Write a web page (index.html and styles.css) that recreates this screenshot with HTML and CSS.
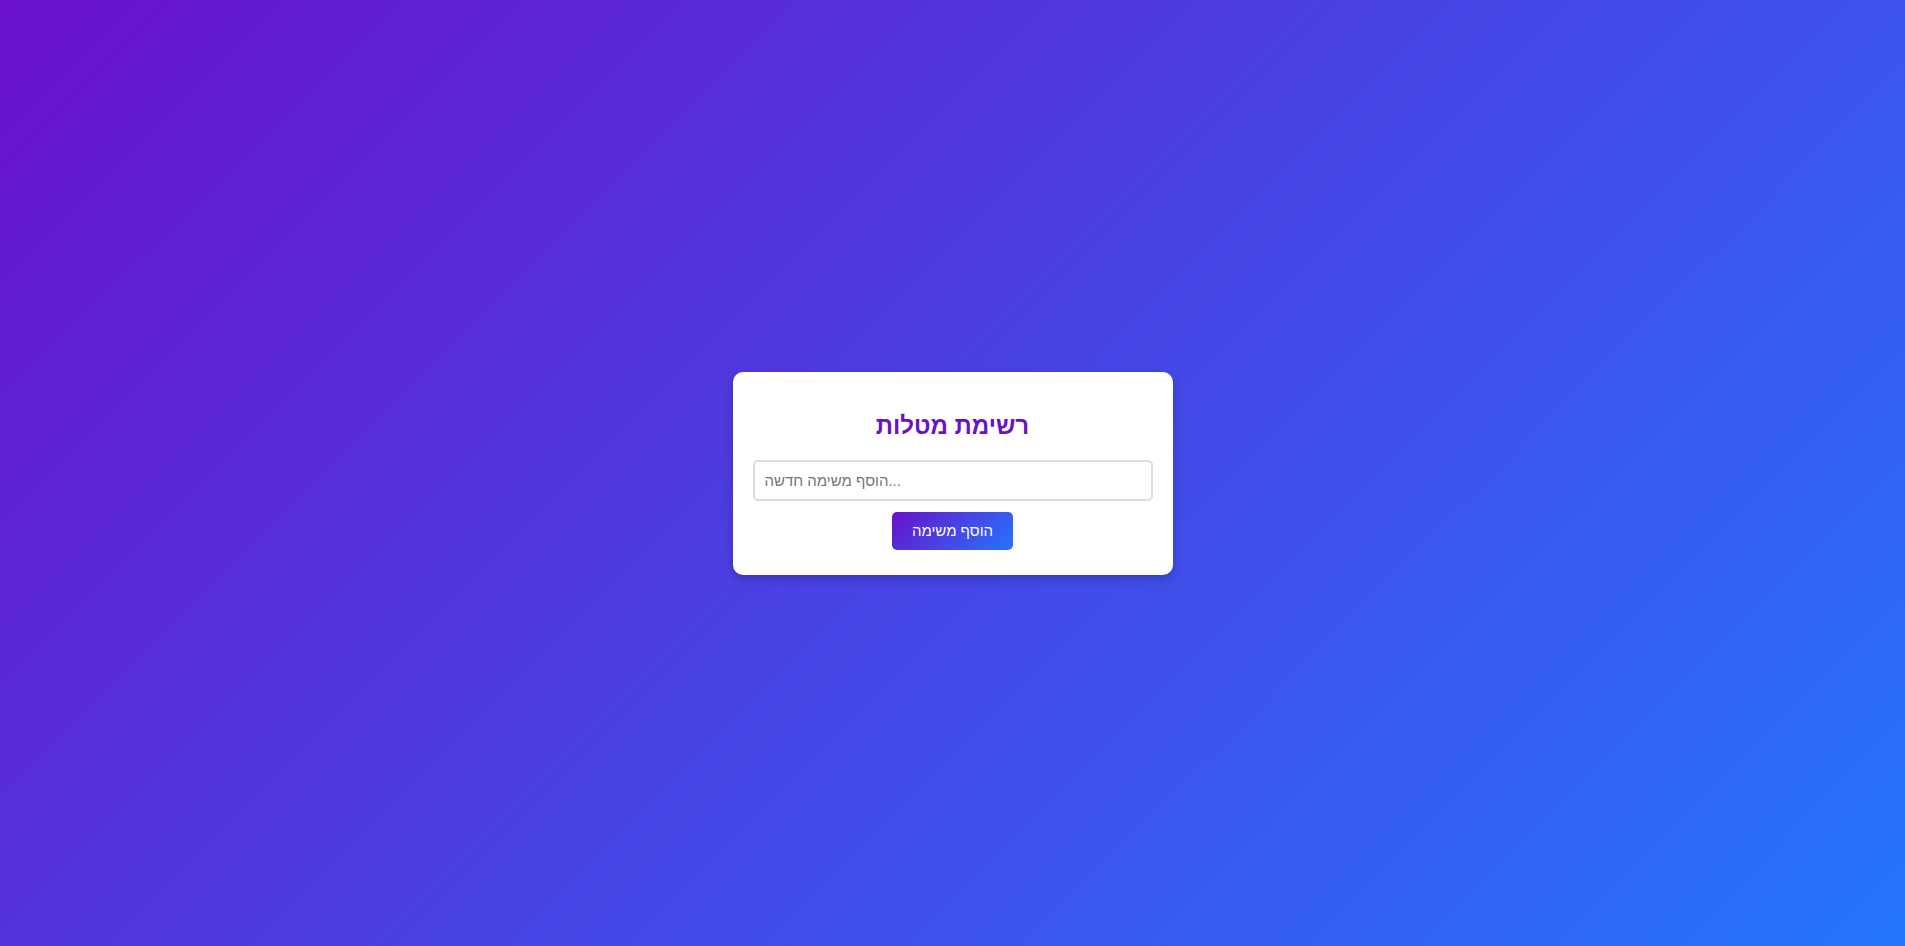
FILE: index.html
```html
<!DOCTYPE html>
<html lang="he">
<head>
<meta charset="utf-8">
<title>רשימת מטלות</title>
<link rel="stylesheet" href="styles.css">
</head>
<body>
<div class="card">
  <h2 class="title">רשימת מטלות</h2>
  <input class="task-input" type="text" placeholder="הוסף משימה חדשה...">
  <button class="add-btn" type="button">הוסף משימה</button>
</div>
</body>
</html>
```
FILE: styles.css
```css
html, body {
  margin: 0;
  padding: 0;
}
body {
  font-family: "Liberation Sans", Arial, sans-serif;
  background: linear-gradient(135deg, #6a11cb, #2575fc);
  min-height: 100vh;
  display: flex;
  align-items: center;
  justify-content: center;
}
.card {
  background: #fff;
  width: 400px;
  padding: 20px;
  border-radius: 10px;
  box-shadow: 0 4px 10px rgba(0, 0, 0, 0.2);
  text-align: center;
  display: flex;
  flex-direction: column;
  align-items: center;
}
.title {
  margin: 20px 0 20px;
  font-size: 24px;
  line-height: 28px;
  font-weight: bold;
  color: #6a11cb;
}
.task-input {
  width: 100%;
  box-sizing: border-box;
  padding: 10px;
  font-family: "Liberation Sans", Arial, sans-serif;
  font-size: 15px;
  line-height: 17px;
  border: 2px solid #ddd;
  border-radius: 5px;
  outline: none;
  color: #333;
}
.task-input::placeholder {
  color: #757575;
}
.add-btn {
  margin-top: 11px;
  margin-bottom: 5px;
  padding: 10px 20px;
  font-family: "Liberation Sans", Arial, sans-serif;
  font-size: 15px;
  line-height: 18px;
  color: #fff;
  border: none;
  border-radius: 5px;
  background: linear-gradient(135deg, #6a11cb, #2575fc);
  cursor: pointer;
}
```
